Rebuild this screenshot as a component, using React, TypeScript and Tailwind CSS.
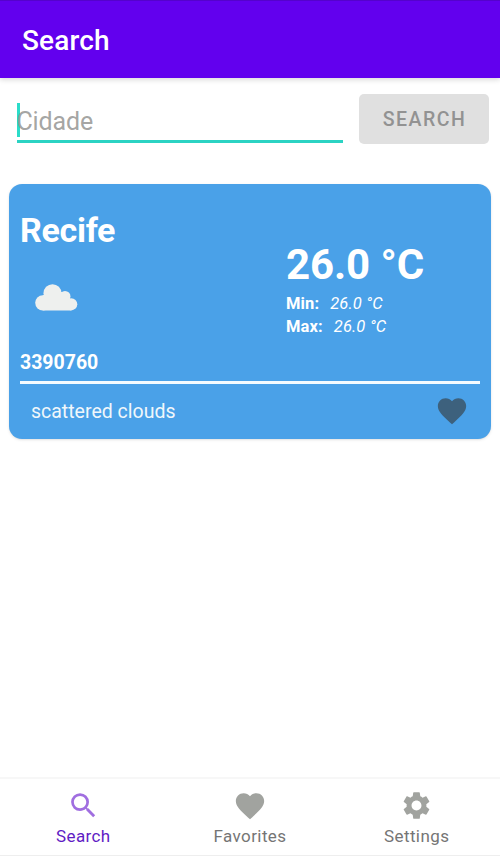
import React from "react";
import { MdSearch, MdFavorite, MdSettings } from "react-icons/md";

function Cloud() {
  return (
    <svg className="mt-[34px] ml-[15px] h-[27px] w-[43px] shrink-0 fill-[#eef0ee]" viewBox="0 0 43 27">
      <circle cx="7.8" cy="18.8" r="7.6" />
      <circle cx="17.5" cy="9.2" r="9" />
      <circle cx="30" cy="12.4" r="5.5" />
      <circle cx="36.2" cy="20.3" r="6.1" />
      <path d="M7.8 26.4V11.2L17 8L28 8L35 14.2L36.2 26.4Z" />
    </svg>
  );
}

function Tab({ icon, label, active }: { icon: React.ReactNode; label: string; active?: boolean }) {
  return (
    <button className={"flex flex-1 flex-col items-center pt-[10px] " + (active ? "text-[#5f1cc4]" : "text-[#757575]")}>
      <span className={"flex h-[33px] items-center " + (active ? "text-[#a06ee0]" : "text-[#a1a39f]")}>{icon}</span>
      <span className="mt-[4px] text-[17px] leading-[20px] tracking-[0.4px]">{label}</span>
    </button>
  );
}

export default function App() {
  return (
    <div className="flex h-[856px] w-[500px] flex-col overflow-hidden bg-white font-['Roboto',sans-serif]">
      <header className="flex h-[78px] shrink-0 items-center border-t border-[#5502cc] bg-[#6200ee] px-[22px] pt-[3px] shadow-[0_2px_5px_rgba(0,0,0,0.14)]">
        <h1 className="text-[28px] font-medium leading-8 tracking-[0.15px] text-white">Search</h1>
      </header>
      <div className="flex shrink-0 pt-4 pl-[16.5px] pr-[11px]">
        <div className="flex h-[49px] w-[326.5px] border-b-[3px] border-[#2bd3c3] pt-[9px]">
          <span className="-mr-[3px] h-[34px] w-[3px] shrink-0 bg-[#2bdcc9]" />
          <span className="pt-[4px] text-[25px] leading-[30px] tracking-[-0.15px] text-[#9a9a98]/90">Cidade</span>
        </div>
        <button className="ml-4 h-[50px] w-[130px] rounded-[5px] bg-[#e0e0e0] pt-[2px] pl-[1px] text-[19.5px] font-medium tracking-[1.5px] text-[#929292]">SEARCH</button>
      </div>
      <section className="mt-[39.5px] ml-[9.4px] flex h-[255px] w-[481.4px] shrink-0 flex-col rounded-[13px] bg-[#4aa1e8] pr-[10.8px] pl-[10.6px] text-white shadow-sm">
        <div className="flex h-[197px]">
          <div className="flex w-[266px] flex-col">
            <h2 className="mt-[26px] text-[34px] font-bold leading-[40px] tracking-[-0.3px]">Recife</h2>
            <Cloud />
            <span className="mt-[40px] text-[19.5px] font-bold leading-6">3390760</span>
          </div>
          <div className="flex flex-col pt-[56px]">
            <span className="text-[42px] font-bold leading-[50px] tracking-[-0.1px]">26.0 °C</span>
            <div className="mt-[2px] flex gap-[11px] text-[16.5px] leading-[23px] tracking-[0.12px]"><b>Min:</b><i>26.0 °C</i></div>
            <div className="flex gap-[11px] text-[16.5px] leading-[23px] tracking-[0.12px]"><b>Max:</b><i>26.0 °C</i></div>
          </div>
        </div>
        <div className="h-[3px] shrink-0 bg-[#f4fbff]" />
        <div className="flex h-[55px] items-center justify-between px-[11px]">
          <span className="pt-[2px] text-[19.5px] text-[#f0f7fb]">scattered clouds</span>
          <MdFavorite size={34} className="text-[#3d617d]" />
        </div>
      </section>
      <nav className="mt-auto flex h-[79px] border-t-2 border-b border-t-[#f7f7f7] border-b-[#eeeeee] bg-white">
        <Tab active label="Search" icon={<MdSearch size={33} />} />
        <Tab label="Favorites" icon={<MdFavorite size={34} />} />
        <Tab label="Settings" icon={<MdSettings size={33} />} />
      </nav>
    </div>
  );
}
